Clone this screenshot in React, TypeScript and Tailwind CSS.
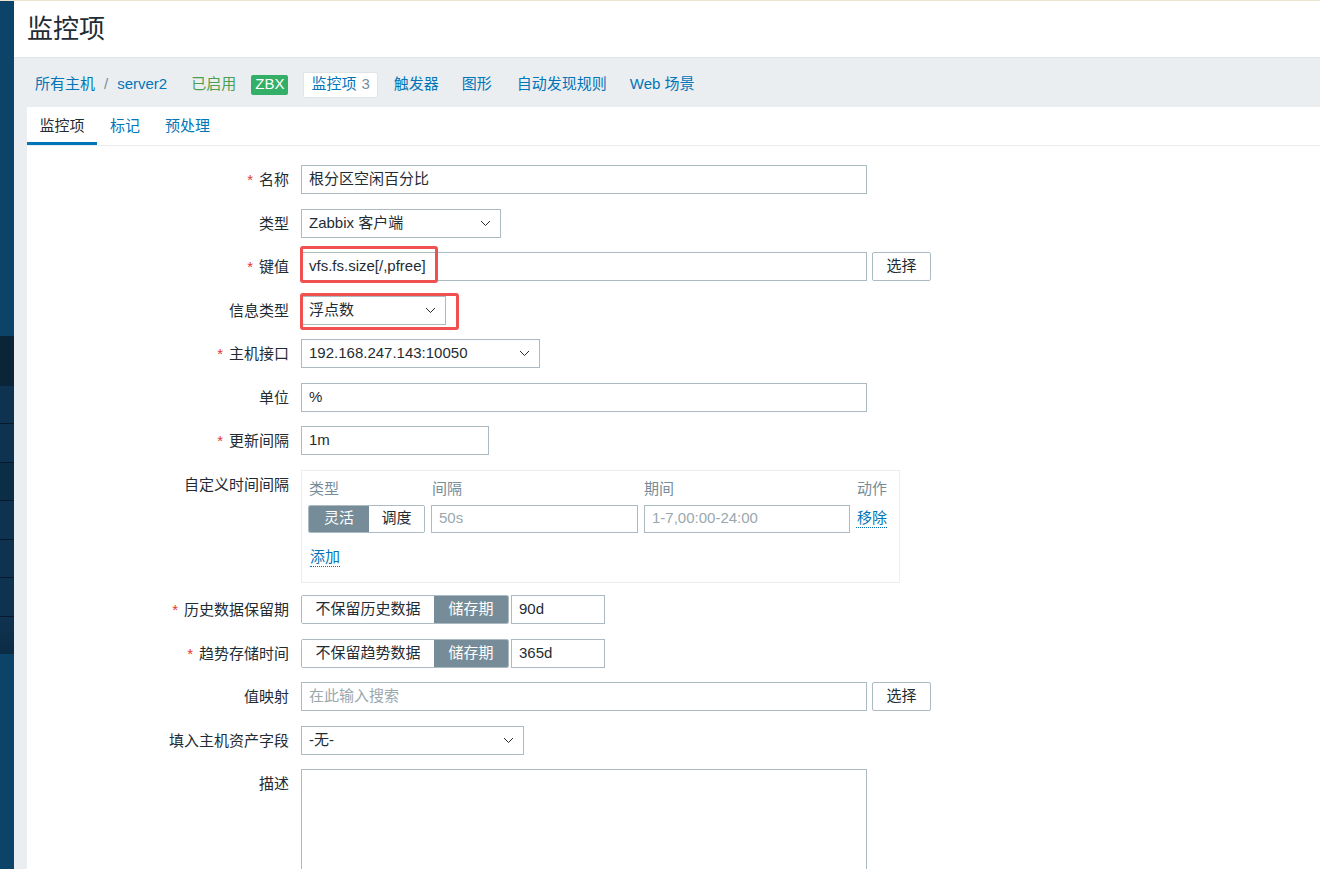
import React from "react";

const FONT = { fontFamily: '"Liberation Sans", Arial, "Noto Sans CJK SC", sans-serif' };

function Chevron() {
  return (
    <svg width="11" height="7" viewBox="0 0 11 7" className="shrink-0">
      <path d="M1 1 L5.5 5.5 L10 1" fill="none" stroke="#1f2c33" strokeWidth="1" />
    </svg>
  );
}

function Label({ text, req }: { text: string; req?: boolean }) {
  return (
    <div className="h-[29px] flex items-center justify-end text-[15px] text-[#1f2c33] whitespace-nowrap pt-[2px]">
      {req && <span className="text-[#e33734] mr-[6px]">*</span>}
      {text}
    </div>
  );
}

function Input({ w, value, placeholder }: { w: string; value?: string; placeholder?: string }) {
  return (
    <div className={`${w} h-[29px] border border-[#acbbc2] bg-white flex items-center px-[7px] text-[15px] ${value ? "text-[#1f2c33]" : "text-[#9aa8ae]"}`}>
      {value ?? placeholder}
    </div>
  );
}

function Select({ w, value }: { w: string; value: string }) {
  return (
    <div className={`${w} h-[29px] border border-[#acbbc2] bg-white flex items-center justify-between pl-[7px] pr-[9px] text-[15px] text-[#1f2c33]`}>
      <span>{value}</span>
      <Chevron />
    </div>
  );
}

function SelBtn() {
  return (
    <div className="ml-[5px] w-[59px] h-[29px] border border-[#acbbc2] rounded-[2px] bg-white flex items-center justify-center text-[15px] text-[#1f2c33]">
      选择
    </div>
  );
}

function Storage({ left, value }: { left: string; value: string }) {
  return (
    <div className="flex items-center">
      <div className="flex h-[29px] border border-[#acbbc2] rounded-[2px] overflow-hidden text-[15px]">
        <div className="w-[132px] flex items-center justify-center bg-white text-[#1f2c33]">{left}</div>
        <div className="w-[74px] flex items-center justify-center bg-[#768d99] text-white">储存期</div>
      </div>
      <div className="ml-[2px]">
        <Input w="w-[94px]" value={value} />
      </div>
    </div>
  );
}

export default function App() {
  return (
    <div className="min-h-screen flex flex-col" style={FONT}>
      <div className="h-[1px] bg-[#ece3cf] w-full" />
      <div className="flex flex-1">
        {/* sidebar */}
        <div className="w-[14px] shrink-0 flex flex-col bg-[#0b4468]">
          <div className="h-[335px]" />
          <div className="h-[50px] bg-[#0a2538]" />
          <div className="h-[37px] bg-[#0e3350]" />
          <div className="h-[1px] bg-[#08192a]" />
          <div className="h-[38px] bg-[#0e3350]" />
          <div className="h-[1px] bg-[#08192a]" />
          <div className="h-[37px] bg-[#0b2e47]" />
          <div className="h-[1px] bg-[#08192a]" />
          <div className="h-[38px] bg-[#0e3350]" />
          <div className="h-[1px] bg-[#08192a]" />
          <div className="h-[37px] bg-[#0e3350]" />
          <div className="h-[1px] bg-[#08192a]" />
          <div className="h-[38px] bg-[#0e3350]" />
          <div className="h-[1px] bg-[#08192a]" />
          <div className="h-[37px] bg-gradient-to-b from-[#0e3350] to-[#0c2c44]" />
          <div className="flex-1" />
        </div>

        {/* main */}
        <div className="flex-1 flex flex-col bg-[#ebeef0] min-w-0">
          <div className="h-[57px] bg-white border-b border-[#dfe4e7] flex items-center pl-[13px]">
            <h1 className="text-[26px] text-[#1f2c33] leading-none">监控项</h1>
          </div>

          {/* breadcrumb / nav */}
          <div className="h-[49px] pl-[21px] pt-[4px] flex items-center text-[15px] whitespace-nowrap">
            <span className="text-[#0275b8]">所有主机</span>
            <span className="mx-[9px] text-[#768d99]">/</span>
            <span className="text-[#0275b8]">server2</span>
            <span className="ml-[24px] text-[#4b9f4f]">已启用</span>
            <span className="ml-[15px] h-[20px] px-[4px] flex items-center bg-[#34af67] text-white rounded-[2px]">ZBX</span>
            <span className="ml-[15px] h-[26px] px-[7px] flex items-center bg-white border border-[#dfe4e7] rounded-[2px] text-[#0275b8]">
              监控项<span className="ml-[5px] text-[#768d99]">3</span>
            </span>
            <span className="ml-[16px] text-[#0275b8]">触发器</span>
            <span className="ml-[23px] text-[#0275b8]">图形</span>
            <span className="ml-[25px] text-[#0275b8]">自动发现规则</span>
            <span className="ml-[23px] text-[#0275b8]">Web 场景</span>
          </div>

          {/* card */}
          <div className="ml-[13px] flex-1 bg-white">
            <div className="h-[39px] flex items-end border-b border-[#ebeef0] text-[15px]">
              <div className="w-[70px] h-[39px] flex items-center justify-center border-b-[3px] border-[#0275b8] text-[#1f2c33] pt-[4px]">监控项</div>
              <div className="ml-[13px] h-[39px] flex items-center text-[#0275b8] pt-[1px]">标记</div>
              <div className="ml-[25px] h-[39px] flex items-center text-[#0275b8] pt-[1px]">预处理</div>
            </div>

            <div className="pt-[19px] grid grid-cols-[262px_1fr] gap-x-[12px] gap-y-[14.5px] items-start">
              <Label text="名称" req />
              <Input w="w-[566px]" value="根分区空闲百分比" />

              <Label text="类型" />
              <Select w="w-[200px]" value="Zabbix 客户端" />

              <Label text="键值" req />
              <div className="flex relative">
                <Input w="w-[566px]" value="vfs.fs.size[/,pfree]" />
                <SelBtn />
                <div className="absolute left-[-1px] top-[-6px] w-[138px] h-[37px] border-[3px] border-[#f05050] rounded-[3px]" />
              </div>

              <Label text="信息类型" />
              <div className="relative">
                <Select w="w-[145px]" value="浮点数" />
                <div className="absolute left-[-1px] top-[-3px] w-[159px] h-[37px] border-[3px] border-[#f05050] rounded-[3px]" />
              </div>

              <Label text="主机接口" req />
              <Select w="w-[239px]" value="192.168.247.143:10050" />

              <Label text="单位" />
              <Input w="w-[566px]" value="%" />

              <Label text="更新间隔" req />
              <Input w="w-[188px]" value="1m" />

              <Label text="自定义时间间隔" />
              <div className="w-[599px] mb-[-2px] border border-[#ebeef0] px-[6px] pt-[7px] pb-[14px]">
                <div className="grid grid-cols-[117px_207px_206px_auto] gap-x-[6px] text-[15px] text-[#768d99] h-[20px] items-center">
                  <span className="pl-[1px]">类型</span>
                  <span className="pl-[1px]">间隔</span>
                  <span>期间</span>
                  <span className="pl-[1px]">动作</span>
                </div>
                <div className="mt-[7px] grid grid-cols-[117px_207px_206px_auto] gap-x-[6px] items-center">
                  <div className="flex h-[28px] border border-[#acbbc2] rounded-[2px] overflow-hidden text-[15px]">
                    <div className="w-[60px] flex items-center justify-center bg-[#768d99] text-white">灵活</div>
                    <div className="flex-1 flex items-center justify-center bg-white text-[#1f2c33]">调度</div>
                  </div>
                  <div className="h-[28px] border border-[#acbbc2] flex items-center px-[7px] text-[15px] text-[#9aa8ae]">50s</div>
                  <div className="h-[28px] border border-[#acbbc2] flex items-center px-[7px] text-[15px] text-[#9aa8ae]">1-7,00:00-24:00</div>
                  <span className="pl-[1px] text-[15px] text-[#0275b8] border-b border-dotted border-[#0275b8] leading-[18px] self-center justify-self-start">移除</span>
                </div>
                <div className="mt-[15px] h-[20px] flex items-center">
                  <span className="ml-[2px] text-[15px] text-[#0275b8] border-b border-dotted border-[#0275b8] leading-[18px]">添加</span>
                </div>
              </div>

              <Label text="历史数据保留期" req />
              <Storage left="不保留历史数据" value="90d" />

              <Label text="趋势存储时间" req />
              <Storage left="不保留趋势数据" value="365d" />

              <Label text="值映射" />
              <div className="flex">
                <Input w="w-[566px]" placeholder="在此输入搜索" />
                <SelBtn />
              </div>

              <Label text="填入主机资产字段" />
              <Select w="w-[223px]" value="-无-" />

              <Label text="描述" />
              <div className="w-[566px] h-[130px] border border-[#acbbc2] bg-white" />
            </div>
          </div>
        </div>
      </div>
    </div>
  );
}
